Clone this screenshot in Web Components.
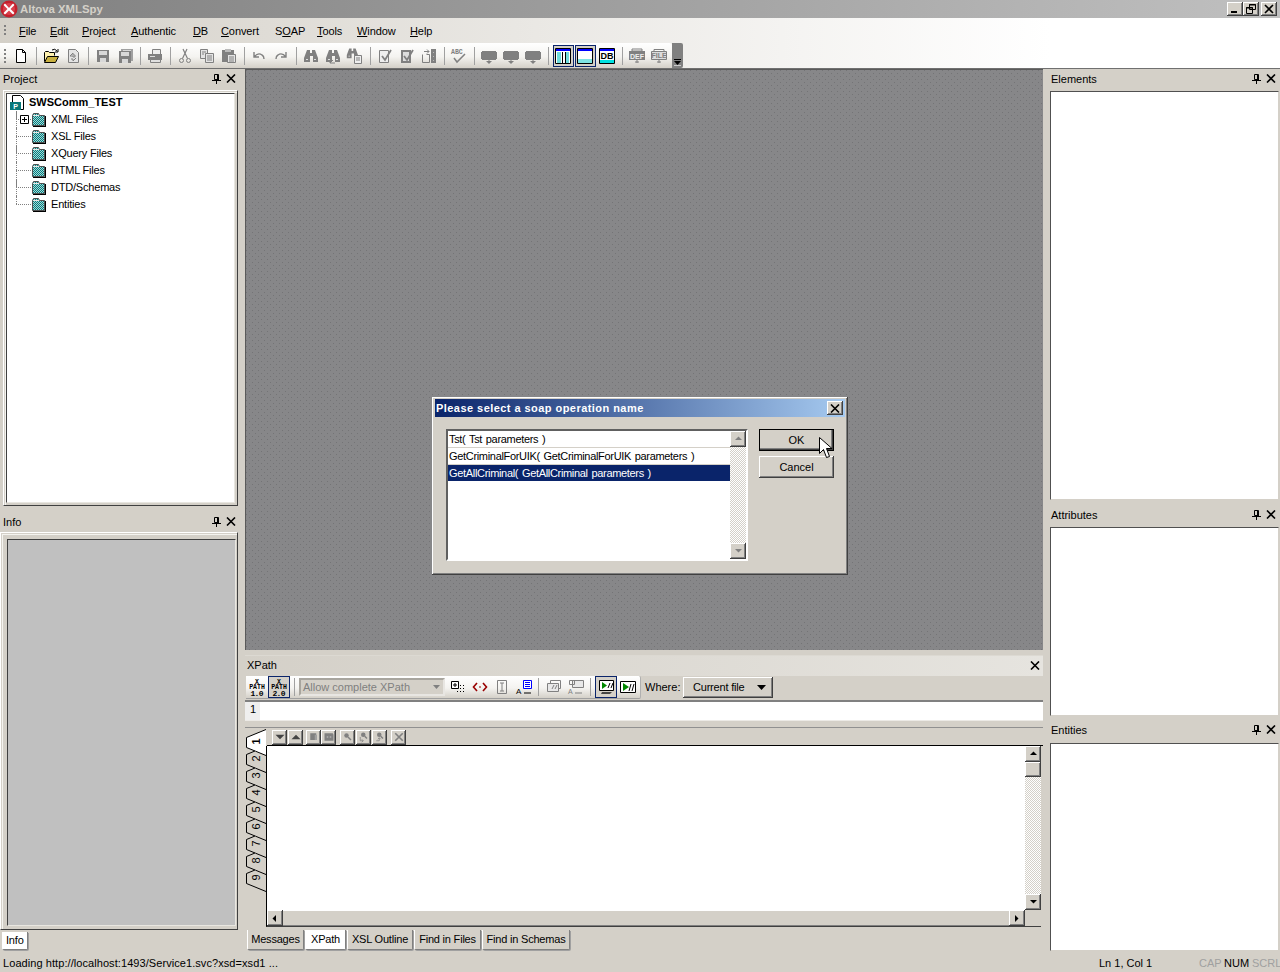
<!DOCTYPE html>
<html>
<head>
<meta charset="utf-8">
<title>Altova XMLSpy</title>
<style>
  html,body{ margin:0; padding:0; }
  body{
    width:1280px; height:972px; overflow:hidden;
    display:flex; flex-direction:column;
    background:#d4d0c8; color:#000;
    font:11px/13px "Liberation Sans",Arial,sans-serif;
  }
</style>
</head>
<body>
<app-titlebar caption="Altova XMLSpy"></app-titlebar>
<app-menubar></app-menubar>
<app-toolbar></app-toolbar>
<app-workspace>
  <dock-pane slot="left" heading="Project" head="21" body="416" inset="3" wide="235" raised>
    <project-tree></project-tree>
  </dock-pane>
  <dock-pane slot="left" heading="Info" head="20" body="398" inset="0" wide="238" raised gap="6" tone="gray"></dock-pane>
  <tab-strip slot="left" tabs="Info" active="Info" pad="2" top="2" tall="18"></tab-strip>

  <doc-canvas slot="center">
    <soap-dialog></soap-dialog>
  </doc-canvas>
  <xpath-panel slot="center"></xpath-panel>

  <dock-pane slot="right" heading="Elements" head="22" body="409" inset="7" wide="229"></dock-pane>
  <dock-pane slot="right" heading="Attributes" head="22" body="189" inset="7" wide="229" gap="5"></dock-pane>
  <dock-pane slot="right" heading="Entities" head="23" body="208" inset="7" wide="229" gap="4"></dock-pane>
</app-workspace>
<app-statusbar></app-statusbar>

<script>
// icon table, 16px grid unless the entry says otherwise
const G = "#808080";
const floppy = (x,y,c)=>`<path d="M${x} ${y}h12v12H${x}z" fill="${c}"/><path d="M${x+2} ${y+1}h8v4h-8zM${x+3} ${y+8}h6v4h-6z" fill="#d8d8d8"/>`;
const binoc = `<path d="M4 2h3v3h2V2h3l3 8v4h-5V8H7v6H1v-4z" fill="${G}"/><path d="M3 11h2v1H3zM11 11h2v1h-2z" fill="#ddd"/>`;
const box18 = `<path d="M1 4h1V3h14v1h1v7h-1v1H2v-1H1z" fill="${G}"/><path d="M9 12v3" stroke="${G}"/><path d="M6 13h6l-3 3z" fill="${G}"/>`;
const mono = `font-family="Liberation Mono,monospace" font-weight="700" text-anchor="middle"`;
const sans = `font-family="Liberation Sans,sans-serif" font-weight="700" text-anchor="middle"`;
const xpathIcon = v=>`<text x="8" y="4.5" font-size="6.5" ${mono}>X</text><text x="8" y="10" font-size="6.5" ${mono}>PATH</text><text x="8" y="17" font-size="8" ${mono} textLength="13">${v}</text>`;
const ICONS = {
  new:`<path d="M3.5 1.5h6l3 3v10h-9z" fill="#fff" stroke="#000"/><path d="M9.5 1.5v3h3" fill="none" stroke="#000"/>`,
  open:`<path d="M1.5 13.5v-9l1-1h3l1 1h5v3" fill="#fff2b0" stroke="#000"/><path d="M1.5 14.5l3-6h11l-3 6z" fill="#c8b040" stroke="#000"/><path d="M9 2q3-2 5 1M15 1v3h-3" fill="none" stroke="#000"/>`,
  refresh:`<path d="M3.5 1.5h7l3 3v10h-10z" fill="#e4e4e4" stroke="${G}"/><path d="M5 8l3-3v2h2v2H8v-1zM11 10l-3 3v-2H6" fill="none" stroke="${G}"/>`,
  save:floppy(2,2,G),
  saveall:floppy(4,1,"#a0a0a0")+floppy(2,3,G),
  print:`<path d="M5.5 1.5h8v5h-8z" fill="#eee" stroke="${G}"/><path d="M1 6h14v6H1z" fill="${G}"/><path d="M3.5 11.5h10v3h-10z" fill="#e0e0e0" stroke="${G}"/><path d="M3 8h5v1H3z" fill="#ddd"/>`,
  cut:`<circle cx="4.5" cy="12.5" r="2" fill="none" stroke="${G}"/><circle cx="11.5" cy="12.5" r="2" fill="none" stroke="${G}"/><path d="M5.5 10.5 10 1M10.5 10.5 6 1" fill="none" stroke="${G}" stroke-width="1.2"/>`,
  copy:`<path d="M1.5 1.5h7v9h-7z" fill="#e4e4e4" stroke="${G}"/><path d="M6.5 5.5h8v9h-8z" fill="#e4e4e4" stroke="${G}"/><path d="M8 8h5M8 10h5M8 12h5M3 4h4M3 6h2" stroke="${G}"/>`,
  paste:`<path d="M1 2h12v12H1z" fill="${G}"/><path d="M4 1h6v3H4z" fill="#bbb"/><path d="M6.5 6.5h8v8h-8z" fill="#e4e4e4" stroke="${G}"/><path d="M8 9h5M8 11h5M8 13h5" stroke="${G}"/>`,
  undo:`<path d="M3 4v5h5M3 9q4-5 8-2 2 1 2 4" fill="none" stroke="${G}" stroke-width="1.4"/>`,
  redo:`<path d="M13 4v5H8M13 9q-4-5-8-2-2 1-2 4" fill="none" stroke="${G}" stroke-width="1.4"/>`,
  find:binoc,
  findnext:binoc+`<path d="M3 11v3h5M3 14l3-3" transform="translate(2 1)" fill="none" stroke="${G}"/>`,
  findin:`<g transform="translate(-1 -1) scale(.8)">${binoc}</g><path d="M7.5 7.5h7v8h-7z" fill="#eee" stroke="${G}"/><path d="M9 10h4M9 12h4" stroke="${G}"/>`,
  checkdoc:`<path d="M2.5 2.5h9v12h-9z" fill="#eee" stroke="${G}"/><path d="M5 8l3 4 6-10" fill="none" stroke="${G}" stroke-width="1.8"/>`,
  validate:`<path d="M2 2h10v13H2z" fill="${G}"/><path d="M4 4h6v9H4z" fill="#ddd"/><path d="M5 8l3 4 6-10" fill="none" stroke="${G}" stroke-width="1.8"/>`,
  assign:`<path d="M1.5 6.5v8h7v-8h-3" fill="none" stroke="${G}"/><path d="M3 3.5h5M6 1.5l2 2-2 2" fill="none" stroke="${G}"/><path d="M10 1h5v14h-5z" fill="${G}"/><path d="M12 4h1v1h-1zM12 8h1v1h-1zM12 12h1v1h-1z" fill="#bbb"/>`,
  abc:`<text x="0" y="6" font-size="6.5" font-family="Liberation Mono,monospace" font-weight="700" fill="${G}">ABC</text><path d="M3 10l3 4 8-8" fill="none" stroke="${G}" stroke-width="1.5"/>`,
  box:box18,
  view1:`<path d="M.5 .5h15v15H.5z" fill="#fff" stroke="#000"/><path d="M1 1h14v2H1z" fill="#00f"/><path d="M2 4h4v11H2zM11 4h3v11h-3z" fill="#6fdcdc"/><path d="M7 4h1v11H7zM10 4h1v11h-1z" fill="#000"/>`,
  view2:`<path d="M.5 .5h15v15H.5z" fill="#fff" stroke="#000"/><path d="M1 1h14v2H1z" fill="#00f"/><path d="M1 11h14v4H1z" fill="#7fe4e4"/>`,
  db:`<path d="M.5 .5h15v15H.5z" fill="#fff" stroke="#000"/><path d="M1 1h14v2H1z" fill="#00f"/><path d="M1 12h14v3H1z" fill="#00e0e0"/><text x="8" y="11" font-size="9" ${sans}>DB</text>`,
  def:`<path d="M1 3h16v9H1z" fill="${G}"/><path d="M4 1h10v2H4z" fill="none" stroke="${G}"/><text x="9" y="10.5" font-size="7" ${sans} fill="#eee">DEF</text><path d="M9 12v3M7 14h4" stroke="${G}"/>`,
  file:`<path d="M1.5 3.5h15v8h-15z" fill="#ddd" stroke="${G}"/><path d="M4 1.5h10v2H4z" fill="none" stroke="${G}"/><text x="9" y="10" font-size="7" ${sans} fill="${G}">FILE</text><path d="M9 12v3M7 14h4" stroke="${G}"/>`,
  // xpath bar
  xp1:xpathIcon("1.0"),
  xp2:xpathIcon("2.0"),
  tree:`<path d="M1.5 2.5h7v7h-7z" fill="#fff" stroke="#000"/><path d="M3 6h4M5 4v4" stroke="#000"/><path d="M10 6h1v1h-1zM13 6h1v1h-1zM10 9h1v1h-1zM13 9h1v1h-1zM7 12h1v1H7zM10 12h1v1h-1zM13 12h1v1h-1z" fill="#000"/>`,
  tag:`<path d="M5 4 1.5 8 5 12M11 4l3.5 4-3.5 4" fill="none" stroke="#900" stroke-width="1.6"/><path d="M7 8h2" stroke="#900"/>`,
  ibox:`<path d="M3.5 1.5h9v13h-9z" fill="none" stroke="${G}"/><path d="M6 4h4M6 12h4M8 4v8" stroke="${G}"/>`,
  attr:`<path d="M7.5 1.5h8v8h-8z" fill="#fff" stroke="#00f"/><path d="M9 3.5h5M9 5.5h5M9 7.5h5" stroke="#00f"/><text x="0" y="15" font-size="8" font-family="Liberation Sans,sans-serif">A</text><path d="M8 14h7" stroke="#000"/>`,
  win1:`<path d="M4.5 1.5h10v8h-10z" fill="none" stroke="${G}"/><path d="M1.5 4.5h11v8h-11z" fill="#e8e8e8" stroke="${G}"/><path d="M6 10l2-4M9 10l2-4" stroke="${G}"/>`,
  win2:`<path d="M4.5 1.5h11v7h-11z" fill="#e8e8e8" stroke="${G}"/><path d="M1.5 1.5h5v4h-5z" fill="none" stroke="${G}"/><text x="0" y="15" font-size="7" font-family="Liberation Sans,sans-serif" fill="${G}">A</text><path d="M7 14h7" stroke="${G}"/>`,
  run1:`<path d="M1.5 1.5h14v10h-14z" fill="#fff" stroke="#000"/><path d="M4 3l5 3.500L4 10z" fill="#080"/><path d="M10 9l2-5M13 9l2-5" stroke="#000"/><path d="M4 13h10l-2 2H3z" fill="#444"/>`,
  run2:`<path d="M.5 2.5h15v11H.5z" fill="#fff" stroke="#000"/><path d="M3 4l6 4-6 4z" fill="#080"/><path d="M9 12l2-7M12 12l2-7" stroke="#000"/>`,
  // editor mini bar, 12px art in the 16 grid
  down:`<path d="M2 5h12l-6 6z" fill="#444"/>`,
  up:`<path d="M2 11h12L8 5z" fill="#444"/>`,
  bm1:`<path d="M3 3h8v9H3z" fill="${G}"/><path d="M9 5h3v7H9z" fill="#a0a0a0"/>`,
  bm2:`<path d="M2 3h11l1 2v8H2z" fill="${G}"/><path d="M5 7h2v2H5zM9 7h2v2H9z" fill="#b0b0b0"/>`,
  key1:`<circle cx="6" cy="6" r="3" fill="${G}"/><path d="M8 8l4 4" stroke="${G}" stroke-width="2"/>`,
  key2:`<circle cx="7" cy="5" r="3" fill="${G}"/><path d="M9 7l3 3" stroke="${G}" stroke-width="2"/><path d="M3 8v5h4M5 11l2 2-2 2" fill="none" stroke="${G}"/>`,
  key3:`<circle cx="7" cy="5" r="3" fill="${G}"/><path d="M9 7l3 3" stroke="${G}" stroke-width="2"/><path d="M3 13h4v-4M5 11l2-2 2 2" fill="none" stroke="${G}"/>`,
  cross:`<path d="M3 3l10 10M13 3 3 13" stroke="${G}" stroke-width="2.2"/>`
};
const WIDE = { box:18, def:18, file:18 };

class UiIcon extends HTMLElement{
  connectedCallback(){
    const n = this.getAttribute("name"), w = WIDE[n] || 16, size = +this.getAttribute("size") || 16;
    const box = w*size/16;
    this.attachShadow({mode:"open"}).innerHTML =
      `<style>:host{display:inline-flex;flex:none;width:${box}px;height:${size}px}svg{display:block;overflow:visible}</style>
       <svg width="${box}" height="${size}" viewBox="0 0 ${w} 16">${ICONS[n]||""}</svg>`;
  }
}
customElements.define("ui-icon", UiIcon);

const RAISED = "box-shadow:inset -1px -1px #404040,inset 1px 1px #fff,inset -2px -2px #808080,inset 2px 2px #d4d0c8;background:#d4d0c8;";

class AppTitlebar extends HTMLElement{
  connectedCallback(){
    this.attachShadow({mode:"open"}).innerHTML = `
    <style>
      :host{ display:flex; align-items:center; height:18px; flex:none; background:linear-gradient(90deg,#808080,#c0c0c0); }
      .logo{ width:18px; height:18px; flex:none; }
      .cap{ margin-left:2px; font-weight:700; font-size:11.4px; color:#d4d0c8; flex:1; }
      .btns{ display:flex; padding-right:3px; }
      .b{ width:16px; height:14px; ${RAISED} display:flex; align-items:center; justify-content:center; }
      .b.last{ margin-left:2px; }
    </style>
    <svg class="logo" viewBox="0 0 18 18"><circle cx="9" cy="9" r="8.5" fill="#c4202c"/><circle cx="9" cy="9" r="6" fill="#d8404c"/><path d="M5 3.500 9 8l4-4.500 1.500 1.500L10.500 9l4 4-1.500 1.500L9 10.500 5 14.500 3.500 13l4-4-4-4z" fill="#fff"/></svg>
    <span class="cap">${this.getAttribute("caption")}</span>
    <div class="btns">
      <div class="b"><svg width="10" height="10"><path d="M1 7h6v2H1z"/></svg></div>
      <div class="b"><svg width="10" height="10"><path d="M3.500 .5h6v5h-6zM.5 3.500h6v6h-6z" fill="#d4d0c8" stroke="#000"/><path d="M3 1h7M0 4h7" stroke="#000"/></svg></div>
      <div class="b last"><svg width="10" height="10"><path d="M1 1l8 8M9 1 1 9" stroke="#000" stroke-width="1.6"/></svg></div>
    </div>`;
  }
}
customElements.define("app-titlebar", AppTitlebar);

const BAR_BG = "linear-gradient(90deg,#d4d0c8,#fff 82%)";

class AppMenubar extends HTMLElement{
  connectedCallback(){
    const items = [["File",31,"F"],["Edit",32,"E"],["Project",49,"P"],["Authentic",62,"A"],["DB",28,"D"],["Convert",54,"C"],["SOAP",42,"O"],["Tools",40,"T"],["Window",53,"W"],["Help",40,"H"]];
    this.attachShadow({mode:"open"}).innerHTML = `
    <style>
      :host{ display:flex; align-items:center; height:25px; flex:none; background:${BAR_BG}; background-size:1280px 100%; padding-left:4px; box-sizing:border-box; }
      .grip{ width:2px; height:12px; margin-right:13px; background:repeating-linear-gradient(#808080 0 2px,transparent 2px 4px); }
      .m{ flex:none; padding-top:1px; letter-spacing:-.1px; }
      u{ text-decoration-thickness:1px; text-underline-offset:1px; }
    </style>
    <div class="grip"></div>
    ${items.map(([t,w,k])=>`<span class="m" style="width:${w}px">${t.replace(k,`<u>${k}</u>`)}</span>`).join("")}`;
  }
}
customElements.define("app-menubar", AppMenubar);

class AppToolbar extends HTMLElement{
  connectedCallback(){
    const groups = [["new"],["open","refresh"],["save","saveall"],["print"],["cut","copy","paste"],["undo","redo"],["find","findnext","findin"],["checkdoc","validate","assign"],["abc"],["box","box","box"],["view1*","view2*","db"],["def","file"]];
    const body = groups.map(g=>g.map(n=>{
      const on = n.endsWith("*"); n = n.replace("*","");
      return `<span class="btn${on?" on":""}"><ui-icon name="${n}"></ui-icon></span>`;
    }).join("")).join(`<i class="sep"></i>`);
    this.attachShadow({mode:"open"}).innerHTML = `
    <style>
      :host{ display:flex; height:26px; flex:none; background:${BAR_BG}; background-size:1280px 100%; border-bottom:1px solid #707070; box-sizing:border-box; }
      .bar{ display:flex; align-items:center; width:672px; box-sizing:border-box; padding-left:10px; position:relative;
            background:linear-gradient(#fff,#f4f3f0 55%,#d4d0c8); border-top-right-radius:3px; }
      .bar::before{ content:""; position:absolute; left:4px; top:6px; width:2px; height:14px; background:repeating-linear-gradient(#808080 0 2px,transparent 2px 4px); }
      .btn{ width:22px; height:22px; flex:none; display:flex; align-items:center; justify-content:center; box-sizing:border-box; }
      .btn.on{ border:1px solid #0a246a; background:#d4d0c8; width:21px; margin:0 .5px; }
      .sep{ width:1px; height:18px; flex:none; margin:0 3.5px; background:#a0a0a0; }
      .more{ width:11px; background:#808080; display:flex; align-items:flex-end; justify-content:center; padding-bottom:2px; border-radius:0 2px 2px 0; }
    </style>
    <div class="bar">${body}</div>
    <div class="more"><svg width="7" height="7"><path d="M0 0h7v1H0zM0 2h7L3.500 6z" fill="#000"/><path d="M0 6.500h7" stroke="#fff" stroke-width=".6"/></svg></div>`;
  }
}
customElements.define("app-toolbar", AppToolbar);

class AppWorkspace extends HTMLElement{
  connectedCallback(){
    this.attachShadow({mode:"open"}).innerHTML = `
    <style>
      :host{ display:grid; grid-template-columns:245px 798px 237px; flex:1; min-height:0; }
      .col{ display:flex; flex-direction:column; min-width:0; min-height:0; }
    </style>
    <div class="col"><slot name="left"></slot></div>
    <div class="col"><slot name="center"></slot></div>
    <div class="col"><slot name="right"></slot></div>`;
  }
}
customElements.define("app-workspace", AppWorkspace);

const PIN_X = `<svg width="9" height="10"><path d="M2.500 .5h4v5h-4z" fill="#d4d0c8" stroke="#000"/><path d="M5 1h2v5H5zM0 6h9v1H0zM4 7h1v3H4z"/></svg>`;
const CLOSE_X = `<svg width="10" height="9"><path d="M1 .5l8 8M9 .5l-8 8" stroke="#000" stroke-width="1.600"/></svg>`;

class DockPane extends HTMLElement{
  connectedCallback(){
    const a = n=>this.getAttribute(n);
    const raised = this.hasAttribute("raised");
    const gray = a("tone")==="gray";
    const frame = raised
      ? `border:1px solid;border-color:#fff #404040 #404040 #fff;box-shadow:inset 1px 1px #d4d0c8,inset 2px 2px #f4f3ef;background:#d4d0c8;padding:${gray?"6px 1px 3px 6px":"2px"};`
      : "border:1px solid;border-color:#505050 #d4d0c8 #d4d0c8 #505050;background:#fff;";
    const inner = raised
      ? `border:1px solid;border-color:#404040 #e8e6e0 #e8e6e0 #404040;background:${gray?"#c0c0c0":"#fff"};`
      : "";
    this.attachShadow({mode:"open"}).innerHTML = `
    <style>
      :host{ display:block; flex:none; margin-top:${a("gap")||0}px; }
      .head{ display:flex; height:${a("head")}px; box-sizing:border-box; padding:4px 4px 0 3px; margin-left:${+a("inset")>3?a("inset")-2:0}px; margin-right:${+a("inset")>3?0:5}px; }
      .t{ flex:1; }
      .i{ display:flex; gap:5.5px; height:11px; padding-top:1px; align-items:flex-start; }
      .frame{ box-sizing:border-box; margin-left:${a("inset")}px; width:${a("wide")}px; height:${a("body")}px; ${frame} display:flex; }
      .inner{ flex:1; min-width:0; ${inner} }
    </style>
    <div class="head"><span class="t">${a("heading")}</span><span class="i">${PIN_X}${CLOSE_X}</span></div>
    <div class="frame"><div class="inner"><slot></slot></div></div>`;
  }
}
customElements.define("dock-pane", DockPane);

const FOLDER = `<svg width="16" height="16" style="display:block"><defs><pattern id="dz" width="2" height="2" patternUnits="userSpaceOnUse"><rect width="2" height="2" fill="#a8d4d4"/><rect width="1" height="1" fill="#008080"/><rect x="1" y="1" width="1" height="1" fill="#008080"/></pattern></defs>
  <path d="M1.500 3.500l1-2h5l1 2h5v10h-12z" fill="url(#dz)" stroke="#505050"/><path d="M2 3h6v1H2z" fill="#e8e8e8"/><path d="M14 4h1v11H2v-1h12z" fill="#000"/></svg>`;

class ProjectTree extends HTMLElement{
  connectedCallback(){
    const kids = ["XML Files","XSL Files","XQuery Files","HTML Files","DTD/Schemas","Entities"];
    this.attachShadow({mode:"open"}).innerHTML = `
    <style>
      :host{ display:block; position:relative; letter-spacing:-.2px; }
      .root{ display:flex; align-items:center; height:17px; padding-left:2px; gap:4px; font-weight:700; letter-spacing:0; }
      .row{ display:flex; align-items:center; height:17px; padding-left:24px; gap:4px; position:relative; }
      .row::before{ content:""; position:absolute; left:9px; width:15px; top:8px; border-top:1px dotted #808080; }
      .row::after{ content:""; position:absolute; left:9px; top:0; height:8px; border-left:1px dotted #808080; }
      .rail{ position:absolute; left:9px; top:17px; height:85px; border-left:1px dotted #808080; }
      .plus{ position:absolute; left:13px; top:4px; width:9px; height:9px; z-index:1; }
    </style>
    <div class="rail"></div>
    <div class="root">
      <svg width="16" height="16"><path d="M3.500 .5h8l3 3v11h-11z" fill="#fff" stroke="#000"/><path d="M1 7h11v8H1z" fill="#087878"/><text x="6.500" y="14" text-anchor="middle" font-size="7" font-weight="700" font-family="Liberation Sans,sans-serif" fill="#fff">P</text></svg>
      <span>SWSComm_TEST</span>
    </div>
    ${kids.map((k,i)=>`<div class="row">${i==0?`<svg class="plus"><path d="M.5 .5h8v8h-8z" fill="#fff" stroke="#000"/><path d="M2 4.500h5M4.500 2v5" stroke="#000"/></svg>`:""}${FOLDER}<span>${k}</span></div>`).join("")}`;
  }
}
customElements.define("project-tree", ProjectTree);

class TabStrip extends HTMLElement{
  connectedCallback(){
    const act = this.getAttribute("active"), pad = this.getAttribute("pad")||0;
    const w = (this.getAttribute("widths")||"").split(",");
    this.attachShadow({mode:"open"}).innerHTML = `
    <style>
      :host{ display:flex; height:25px; flex:none; box-sizing:border-box; padding:${this.getAttribute("top")||0}px 0 0 ${pad}px; gap:1px; }
      .tab{ height:${this.getAttribute("tall")||20}px; box-sizing:border-box; padding:0 3px; display:flex; align-items:center; justify-content:center; background:#d4d0c8;
            white-space:nowrap; letter-spacing:-.2px;
            border:1px solid #fff; border-top:0; border-right-color:#808080; border-bottom-color:#808080; border-radius:0 0 2px 2px; box-shadow:1px 1px 0 #a0a0a0; }
      .tab.on{ background:#fff; border-color:#fff #808080 #808080 #fff; }
    </style>
    ${this.getAttribute("tabs").split(",").map((t,i)=>`<div class="tab${t==act?" on":""}" ${w[i]?`style="width:${w[i]}px"`:""}>${t}</div>`).join("")}`;
  }
}
customElements.define("tab-strip", TabStrip);

class DocCanvas extends HTMLElement{
  connectedCallback(){
    this.attachShadow({mode:"open"}).innerHTML = `
    <style>
      :host{ display:block; position:relative; height:581px; flex:none; box-sizing:border-box; border-left:1px solid #5a5a5a; border-top:1px solid #5a5a5a; background-color:#878789; }
      .dots{ position:absolute; inset:0; background:
        radial-gradient(circle at .5px .5px,#747476 .7px,transparent .8px) 0 0/6px 6px,
        radial-gradient(circle at .5px .5px,#747476 .7px,transparent .8px) 3px 3px/6px 6px; }
    </style><div class="dots"></div><slot></slot>`;
  }
}
customElements.define("doc-canvas", DocCanvas);

const TRACK = "background:conic-gradient(#fff 25%,#d4d0c8 0 50%,#fff 0 75%,#d4d0c8 0) 0 0/2px 2px;";
class WinScroll extends HTMLElement{
  connectedCallback(){
    const h = this.getAttribute("dir")==="h", thumb = this.getAttribute("thumb"), size = +this.getAttribute("btn")||16;
    const tri = d=>({u:"M1 5h7L4.500 1.500z",d:"M1 2h7L4.500 5.500z",l:"M5 1v7L1.500 4.500z",r:"M2 1v7L5.500 4.500z"}[d]);
    const btn = d=>`<div class="b"><svg width="9" height="9"><path d="${tri(d)}" fill="${this.hasAttribute("muted")?"#808080":"#000"}"/></svg></div>`;
    this.attachShadow({mode:"open"}).innerHTML = `
    <style>
      :host{ display:flex; flex:none; flex-direction:${h?"row":"column"}; ${h?"height":"width"}:${size}px; }
      .b{ flex:none; width:${size}px; height:${size}px; ${RAISED} display:flex; align-items:center; justify-content:center; box-sizing:border-box; }
      .t{ flex:1; ${h?"background:#d4d0c8;box-shadow:inset 0 1px #fff,inset 0 -1px #808080;":TRACK} }
      .th{ flex:none; height:${thumb}px; ${RAISED} }
    </style>
    ${btn(h?"l":"u")}${thumb?`<div class="th"></div>`:""}<div class="t"></div>${btn(h?"r":"d")}`;
  }
}
customElements.define("win-scroll", WinScroll);

class SoapDialog extends HTMLElement{
  connectedCallback(){
    const ops = ["Tst( Tst parameters )","GetCriminalForUIK( GetCriminalForUIK parameters )","GetAllCriminal( GetAllCriminal parameters )"];
    this.attachShadow({mode:"open"}).innerHTML = `
    <style>
      :host{ position:absolute; left:186px; top:327px; width:416px; height:178px; box-sizing:border-box; padding:2px 3px 0 3px; ${RAISED} display:flex; flex-direction:column; }
      .cap{ height:18px; flex:none; display:flex; align-items:center; background:linear-gradient(90deg,#0a246a,#a6caf0); color:#fff; font-weight:700; padding:0 2px 0 1px; }
      .cap span{ flex:1; letter-spacing:.45px; }
      .x{ width:16px; height:14px; ${RAISED} display:flex; align-items:center; justify-content:center; }
      .body{ display:flex; padding:12px 0 0 11px; gap:11px; align-items:flex-start; }
      .list{ width:302px; height:132px; box-sizing:border-box; display:flex; border:2px solid; border-color:#606060 #fff #fff #606060; background:#fff; }
      .rows{ flex:1; letter-spacing:-.32px; word-spacing:1px; }
      .r{ height:16px; line-height:16px; padding-left:1px; border-bottom:1px solid #d4d0c8; }
      .r.sel{ background:#0a246a; color:#fff; border-color:#fff; }
      .btns{ display:flex; flex-direction:column; gap:5px; }
      button{ all:unset; width:75px; height:22px; box-sizing:border-box; text-align:center; line-height:20px; ${RAISED} font:inherit; }
      button.def{ outline:1px solid #000; outline-offset:-1px; box-shadow:inset -2px -2px #404040,inset 1px 1px #fff,inset -3px -3px #808080; }
      .cur{ position:absolute; left:387px; top:40px; }
    </style>
    <div class="cap"><span>Please select a soap operation name</span><div class="x"><svg width="10" height="9"><path d="M1 .5l8 8M9 .5l-8 8" stroke="#000" stroke-width="1.600"/></svg></div></div>
    <div class="body">
      <div class="list">
        <div class="rows">${ops.map((o,i)=>`<div class="r${i==2?" sel":""}">${o}</div>`).join("")}</div>
        <win-scroll dir="v" muted></win-scroll>
      </div>
      <div class="btns"><button class="def">OK</button><button>Cancel</button></div>
    </div>
    <svg class="cur" width="15" height="22"><path d="M.5 .5v16l4-4 3 8 3-1-3-8h5.500z" fill="#fff" stroke="#000"/></svg>`;
  }
}
customElements.define("soap-dialog", SoapDialog);

class XpathPanel extends HTMLElement{
  connectedCallback(){
    const ic = (n,on)=>`<span class="btn${on?" on":""}"><ui-icon name="${n}"></ui-icon></span>`;
    const mini = (n,extra)=>`<span class="mb" style="${extra||""}"><ui-icon name="${n}" size="12"></ui-icon></span>`;
    this.attachShadow({mode:"open"}).innerHTML = `
    <style>
      :host{ display:flex; flex-direction:column; flex:1; min-height:0; background:#d4d0c8; }
      .head{ height:21px; flex:none; margin-top:5px; display:flex; align-items:center; justify-content:space-between; padding:0 3px 2px 2px; background:linear-gradient(90deg,#d4d0c8,#e6e4df); border-top:1px solid #dcd9d2; box-sizing:border-box; }
      .bar{ height:23px; flex:none; display:flex; align-items:center; }
      .tb{ display:flex; align-items:center; height:23px; width:395px; margin-left:1px; box-sizing:border-box; background:linear-gradient(#fff,#f4f3f0 55%,#d4d0c8); border-bottom:1px solid #a0a0a0; border-right:1px solid #b0b0b0; border-radius:0 2px 2px 0; }
      .btn{ width:22px; height:22px; flex:none; display:flex; align-items:center; justify-content:center; box-sizing:border-box; }
      .btn.on{ border:1px solid #0a246a; background:#d4d0c8; }
      .sep{ width:1px; height:18px; flex:none; margin:0 4px 0 3px; background:#a0a0a0; }
      .combo{ width:146px; height:18px; flex:none; box-sizing:border-box; border:2px solid; border-color:#a8a59e #e8e6e2 #e8e6e2 #a8a59e; margin-right:2px; background:#d4d0c8; color:#808080; display:flex; align-items:center; justify-content:space-between; padding:0 3px 0 2px; }
      .where{ margin-left:4px; width:38px; }
      .drop{ width:90px; height:21px; box-sizing:border-box; ${RAISED} display:flex; align-items:center; padding:0 7px 0 10px; justify-content:space-between; letter-spacing:-.2px; }
      .expr{ height:21px; flex:none; margin-top:1px; border-top:2px solid #808080; border-bottom:1px solid #eceae6; background:#fff; box-sizing:border-box; display:flex; }
      .num{ width:15px; background:#efefef; padding:1px 0 0 5px; box-sizing:border-box; }
      .sp{ height:6px; flex:none; border-bottom:1px solid #909090; }
      .ed{ flex:1; min-height:0; display:grid; grid-template-columns:22px 1fr; grid-template-rows:17px 1fr; }
      .tabs{ grid-row:1 / 3; position:relative; }
      .tabs svg{ position:absolute; left:0; top:0; }
      .nums{ position:relative; padding-top:5px; display:flex; flex-direction:column; }
      .nums span{ height:17px; width:20px; margin-left:1px; display:flex; align-items:center; justify-content:center; transform:rotate(-90deg); }
      .nums span.first{ font-weight:700; }
      .mini{ display:flex; align-items:center; padding:1px 0 0 5px; gap:1px; border-bottom:1px solid #000; box-sizing:border-box; height:18px; margin-bottom:-1px; }
      .mb{ width:15px; height:15px; flex:none; ${RAISED} display:flex; align-items:center; justify-content:center; }
      .main{ display:grid; grid-template-columns:1fr 16px; grid-template-rows:1fr 16px; width:775px; height:181px; border-left:1px solid #000; border-bottom:1px solid #404040; margin-left:-1px; background:#fff; margin-top:1px; box-sizing:border-box; }
      .txt{ background:#fff; }
      .corner{ background:#d4d0c8; }
      .vs{ grid-column:2; grid-row:1; }
      .hs{ grid-column:1; grid-row:2; }
    </style>
    <div class="head"><span>XPath</span>${CLOSE_X}</div>
    <div class="bar">
      <div class="tb">
        ${ic("xp1")}${ic("xp2",1)}<i class="sep" style="margin-left:4px"></i>
        <div class="combo"><span>Allow complete XPath</span><svg width="7" height="4"><path d="M0 0h7L3.500 4z" fill="#808080"/></svg></div>
        ${ic("tree")}${ic("tag")}${ic("ibox")}${ic("attr")}<i class="sep"></i>${ic("win1")}${ic("win2")}<i class="sep"></i>${ic("run1",1)}${ic("run2")}
      </div>
      <span class="where">Where:</span>
      <div class="drop"><span>Current file</span><svg width="9" height="5"><path d="M0 0h9L4.500 5z"/></svg></div>
    </div>
    <div class="expr"><div class="num">1</div></div>
    <div class="sp"></div>
    <div class="ed">
      <div class="tabs">
        <svg width="22" height="170">
          ${Array.from({length:9},(_,i)=>{const y=9.5+17*i;
            return `<path d="M21 ${y+18}L1.500 ${y+10}V${y}L${i?10:21} ${i?y-3.5:y-8}" fill="${i==0?"#fff":"#d4d0c8"}" stroke="#000"/>`;}).join("")}
        </svg>
        <div class="nums">${[1,2,3,4,5,6,7,8,9].map(n=>`<span${n==1?' class="first"':""}>${n}</span>`).join("")}</div>
      </div>
      <div class="mini">
        ${mini("down")}${mini("up")}${mini("bm1","margin-left:2px;margin-right:-1px")}${mini("bm2")}${mini("key1","margin-left:3px")}${mini("key2")}${mini("key3")}${mini("cross","margin-left:3px")}
      </div>
      <div class="main">
        <div class="txt"></div>
        <win-scroll class="vs" dir="v" thumb="15"></win-scroll>
        <win-scroll class="hs" dir="h"></win-scroll>
        <div class="corner"></div>
      </div>
    </div>
    <tab-strip tabs="Messages,XPath,XSL Outline,Find in Files,Find in Schemas" active="XPath" pad="2" widths="57,41,66,67,88"></tab-strip>`;
  }
}
customElements.define("xpath-panel", XpathPanel);

class AppStatusbar extends HTMLElement{
  connectedCallback(){
    this.attachShadow({mode:"open"}).innerHTML = `
    <style>
      :host{ display:flex; align-items:center; height:17px; flex:none; padding-left:3px; }
      .msg{ flex:1; letter-spacing:.07px; }
      .ln{ width:100px; }
      .k{ width:25px; color:#a0a0a0; }
      .k.on{ color:#000; width:28px; }
      .k.s{ width:28px; }
    </style>
    <span class="msg">Loading http://localhost:1493/Service1.svc?xsd=xsd1 ...</span>
    <span class="ln">Ln 1, Col 1</span><span class="k">CAP</span><span class="k on">NUM</span><span class="k s">SCRL</span>`;
  }
}
customElements.define("app-statusbar", AppStatusbar);
</script>
</body>
</html>
